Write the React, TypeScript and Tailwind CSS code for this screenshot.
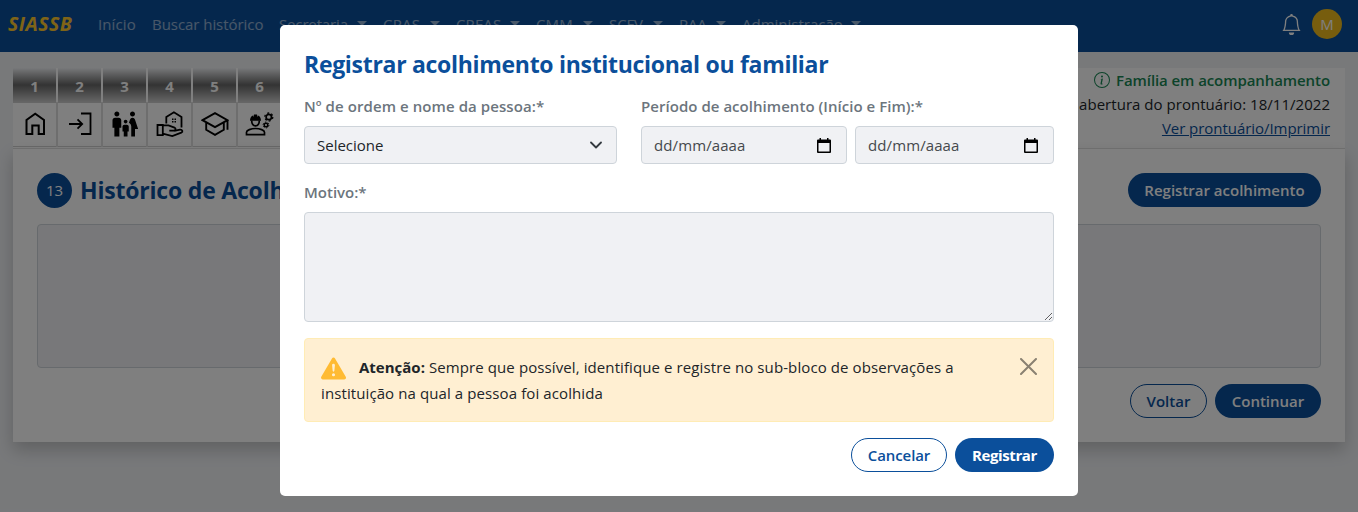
import type { ReactNode } from "react";
import { BsBell, BsExclamationTriangleFill, BsInfoCircle } from "react-icons/bs";
import { MdFamilyRestroom } from "react-icons/md";

function HomeIcon() {
  return (
    <svg width="22" height="24" viewBox="0 0 22 24" fill="none" stroke="currentColor" strokeWidth="2">
      <path d="M2.500 22V8L11.200 1.800 20 8v14h-5.300v-8.500H8.300V22z" />
    </svg>
  );
}

function EnterIcon() {
  return (
    <svg width="24" height="24" viewBox="0 0 24 24" fill="none" stroke="currentColor" strokeWidth="1.800">
      <path d="M13 1.500h9.500v20.500H13M1 12h13M9.500 7.300l4.700 4.700-4.700 4.700" />
    </svg>
  );
}

function ShelterIcon() {
  return (
    <svg width="28" height="28" viewBox="0 0 28 28" fill="none" stroke="currentColor" strokeWidth="1.800">
      <path d="M10.300 13.500V7l7.600-4.800L25.500 7v10.500" />
      <path d="M1.500 15h5.300v10.200H1.500zM6.800 15.300h5.700l6 2.300c1.700.8 1.300 3-.6 3h-4.600M18.300 20.800l5.700-1.200c2.500-.2 3.200 2.200 1.300 3l-9 3.400-9.500-2.400" />
      <path d="M16 8.500h1.500V10H16zM18.500 8.500H20V10h-1.500zM16 11h1.500v1.500H16zM18.500 11H20v1.500h-1.500z" fill="currentColor" stroke="none" />
    </svg>
  );
}

function SchoolIcon() {
  return (
    <svg width="28" height="26" viewBox="0 0 28 26" fill="none" stroke="currentColor" strokeWidth="1.900">
      <path d="M1.500 9.200 14 2.200l12.500 7-12.500 7zM26.500 9.200v9.500M5.200 11.500v7.300l8.800 5 8.800-5v-7.300" />
    </svg>
  );
}

function WorkerIcon() {
  return (
    <svg width="29" height="26" viewBox="0 0 29 26" fill="none" stroke="currentColor" strokeWidth="1.700">
      <path d="M1.500 23.700v-2.500c0-2 4.500-3.700 9-3.700s9 1.700 9 3.700v2.500z" />
      <path d="M6.700 9.500c0 3.500 1.500 5.300 3.800 5.300s3.800-1.800 3.800-5.300" />
      <path d="M5 9.800c0-2.500 1-4.500 2.800-5.300l.5 1.500.7-2.500h3l.7 2.500.5-1.500C15 5.300 16 7.300 16 9.800z" fill="currentColor" stroke="none" />
      <circle cx="23.800" cy="6" r="2.700" />
      <circle cx="23.800" cy="6" r="4" strokeWidth="1.300" strokeDasharray="2 2.190" />
      <circle cx="21" cy="14" r="1.800" strokeWidth="1.400" />
      <circle cx="21" cy="14" r="2.900" strokeWidth="1" strokeDasharray="1.500 1.540" />
    </svg>
  );
}

function CalendarIcon() {
  return (
    <svg width="14" height="15" viewBox="0 0 14 15" fill="black">
      <path fillRule="evenodd" d="M2.500 0h1.500v1.500h6V0h1.500v1.500H13a1 1 0 0 1 1 1V14a1 1 0 0 1-1 1H1a1 1 0 0 1-1-1V2.500a1 1 0 0 1 1-1h1.500zM1.500 5v8.500h11V5z" />
    </svg>
  );
}

const menu = [
  { label: "Secretaria", box: "w-[88px]", text: "tracking-[-0.15px]" },
  { label: "CRAS", box: "w-[57px]", text: "tracking-[0.2px]" },
  { label: "CREAS", box: "w-[64px]", text: "tracking-[0.1px]" },
  { label: "CMM", box: "w-[57px]", text: "tracking-[0.1px]" },
  { label: "SCFV", box: "w-[54px]", text: "tracking-[-0.1px]" },
  { label: "PAA", box: "w-[47px]", text: "tracking-[-0.1px]" },
  { label: "Administração", box: "w-[119px]", text: "tracking-[0px]" },
];

const steps: ReactNode[] = [
  <HomeIcon />,
  <EnterIcon />,
  <MdFamilyRestroom size={30} />,
  <ShelterIcon />,
  <SchoolIcon />,
  <WorkerIcon />,
];

function DateField({ className }: { className: string }) {
  return (
    <div className={`flex h-[38px] items-center justify-between rounded border border-[#ced4da] bg-[#f0f1f4] pr-[15px] pl-3 text-[#45494d] ${className}`}>
      <span className="tracking-[0.1px]">dd/mm/aaaa</span>
      <CalendarIcon />
    </div>
  );
}

export default function App() {
  return (
    <div className="relative h-[512px] w-full overflow-hidden bg-[#f0f2f5] font-['Open_Sans','Noto_Sans',sans-serif] text-[15px] text-[#212529]">
      <nav className="flex h-[52px] items-center bg-[#0b4f9b] pr-4 pb-1 pl-2 text-white/55">
        <span className="w-[90px] text-[19.500px] font-bold tracking-[0.45px] text-[#ffc82e] italic">SIASSB</span>
        <a className="w-[54px] tracking-[0.1px]">Início</a>
        <a className="w-[127px] tracking-[-0.050px]">Buscar histórico</a>
        <div className="flex gap-4">
          {menu.map((m) => (
            <a key={m.label} className={`flex items-center justify-between whitespace-nowrap ${m.box}`}>
              <span className={m.text}>{m.label}</span>
              <span className="-mt-px border-x-[5px] border-t-[5px] border-x-transparent border-t-white/55" />
            </a>
          ))}
        </div>
        <div className="ml-auto flex items-center gap-[10px]">
          <BsBell size={21} className="text-white" />
          <span className="flex size-[30px] items-center justify-center rounded-full bg-[#eebb1d] text-[15px] text-white">M</span>
        </div>
      </nav>

      <main className="px-[13px] pt-4">
        <section className="flex h-20 justify-between bg-white">
          <div className="flex">
            {steps.map((icon, i) => (
              <div key={i} className="mr-[2px] w-[43px]">
                <div className="flex h-[34px] items-center justify-center bg-linear-to-b from-[#f0f2f5] via-[#686868] via-50% to-[#cccccc] pt-[2px] font-bold text-white">
                  {i + 1}
                </div>
                <div className="flex h-[45px] items-center justify-center border-t border-b border-[#ccc] pb-px text-black shadow-[2px_0_0_#ddd]">
                  {icon}
                </div>
              </div>
            ))}
          </div>
          <div className="pr-[15px] text-right leading-6">
            <p className="flex items-center justify-end gap-[6px] font-semibold tracking-[-0.080px] text-[#198754]">
              <BsInfoCircle size={16} />
              Família em acompanhamento
            </p>
            <p className="tracking-[0.030px]">Data de abertura do prontuário: 18/11/2022</p>
            <a className="tracking-[-0.050px] text-[#0b4f9b] underline">Ver prontuário/Imprimir</a>
          </div>
        </section>

        <section className="h-[294px] border-t border-[#ddd] bg-white px-6 pt-6 shadow-[0_8px_16px_rgba(0,0,0,.2)]">
          <div className="flex h-[35px] items-start justify-between">
            <div className="flex items-center gap-2">
              <span className="flex size-[35px] items-center justify-center rounded-full bg-[#0b4f9b] text-white">13</span>
              <h1 className="text-[23px] font-bold tracking-[-0.2px] text-[#0b4f9b]">Histórico de Acolhimento</h1>
            </div>
            <button className="h-[34px] w-[193px] rounded-full bg-[#0b4f9b] font-semibold whitespace-nowrap text-white">
              Registrar acolhimento
            </button>
          </div>
          <div className="mt-4 h-36 rounded border border-[#ced4da] bg-[#f0f1f4]" />
          <div className="mt-4 flex justify-end gap-2">
            <button className="h-[34px] w-[77px] rounded-full border border-[#0b4f9b] font-semibold text-[#0b4f9b]">Voltar</button>
            <button className="h-[34px] w-[106px] rounded-full bg-[#0b4f9b] font-semibold text-white">Continuar</button>
          </div>
        </section>
      </main>

      <div className="absolute inset-0 flex items-start bg-black/50 pt-[25px] pl-[280px]">
        <div role="dialog" className="h-[471px] w-[798px] rounded-[5px] bg-white px-6 pt-[23px]">
          <h2 className="h-8 text-[23px] leading-8 font-bold tracking-[-0.3px] whitespace-nowrap text-[#0b4f9b]">
            Registrar acolhimento institucional ou familiar
          </h2>
          <div className="mt-[14px] flex gap-6">
            <div className="w-[313px]">
              <label className="block h-8 leading-6 font-semibold tracking-[0.080px] text-[#6c757d]">Nº de ordem e nome da pessoa:*</label>
              <div className="flex h-[38px] items-center justify-between rounded border border-[#ced4da] bg-[#f0f1f4] pr-[14px] pl-3">
                <span>Selecione</span>
                <svg width="12" height="8" viewBox="0 0 12 8" fill="none" stroke="#343a40" strokeWidth="1.800" strokeLinecap="round" strokeLinejoin="round">
                  <path d="m1 1.500 5 5 5-5" />
                </svg>
              </div>
            </div>
            <div>
              <label className="block h-8 leading-6 font-semibold tracking-[0.040px] text-[#6c757d]">Período de acolhimento (Início e Fim):*</label>
              <div className="flex gap-2">
                <DateField className="w-[206px]" />
                <DateField className="w-[199px]" />
              </div>
            </div>
          </div>
          <label className="mt-4 block h-8 leading-6 font-semibold text-[#6c757d]">Motivo:*</label>
          <textarea className="block h-[110px] w-full resize rounded border border-[#ced4da] bg-[#f0f1f4]" />
          <div className="mt-4 flex h-[84px] justify-between rounded border border-[#ffecb5] bg-[#ffefd2] pt-[15px] pr-4 pl-4">
            <div className="w-[650px] leading-[26px] tracking-[0.1px] whitespace-nowrap">
              <p className="flex h-[26px] items-center">
                <BsExclamationTriangleFill size={25} className="mt-[3px] mr-[13px] text-[#ffbb33]" />
                <span><b className="tracking-normal">Atenção:</b> Sempre que possível, identifique e registre no sub-bloco de observações a</span>
              </p>
              <p>instituição na qual a pessoa foi acolhida</p>
            </div>
            <svg className="mt-1" width="17" height="17" viewBox="0 0 17 17" stroke="#8a8172" strokeWidth="2" strokeLinecap="round">
              <path d="m1 1 15 15M16 1 1 16" />
            </svg>
          </div>
          <div className="mt-4 flex justify-end gap-2">
            <button className="h-[34px] w-24 rounded-full border border-[#0b4f9b] font-semibold tracking-[-0.1px] text-[#0b4f9b]">Cancelar</button>
            <button className="h-[34px] w-[99px] rounded-full bg-[#0b4f9b] font-bold tracking-[-0.4px] text-white">Registrar</button>
          </div>
        </div>
      </div>
    </div>
  );
}
